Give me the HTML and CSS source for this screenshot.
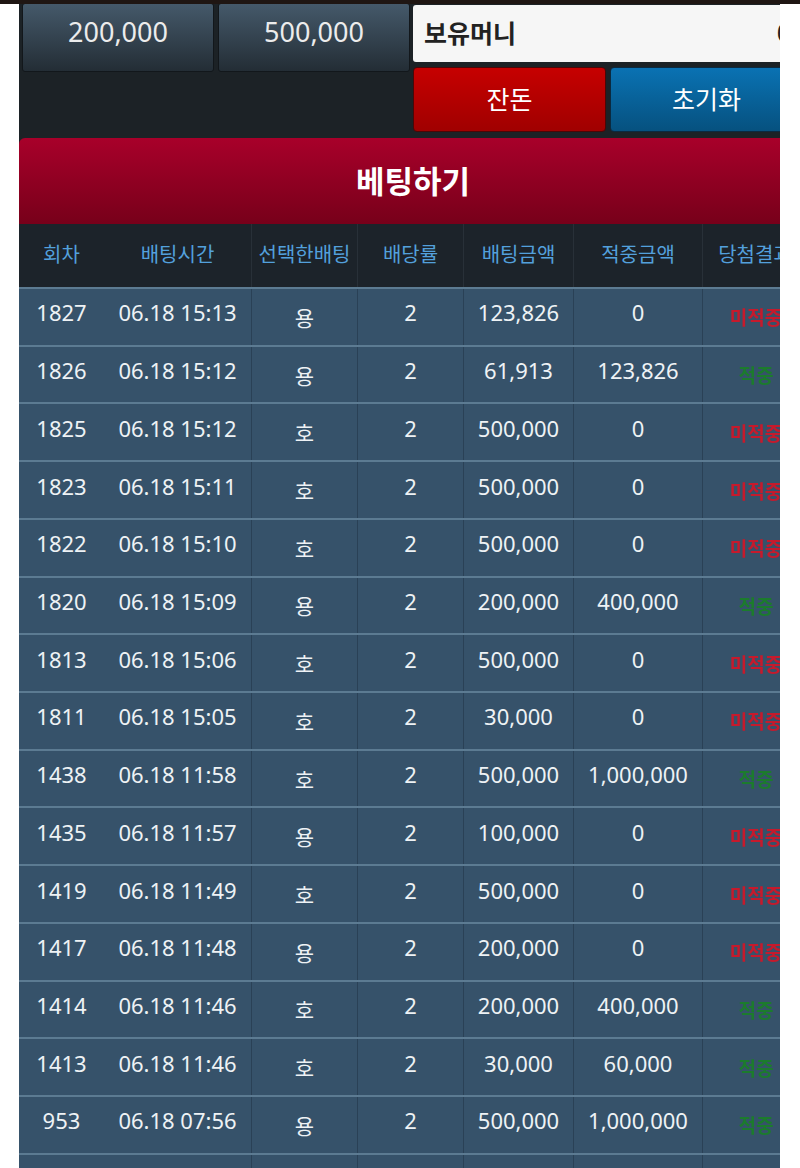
FILE: index.html
```html
<!DOCTYPE html>
<html lang="ko">
<head>
<meta charset="utf-8">
<title>베팅하기</title>
<link rel="stylesheet" href="styles.css">
</head>
<body>
<div class="topbar"></div>
<div class="wrap">
  <div class="inner">
    <div class="controls">
      <div class="amounts">
        <button class="amt">200,000</button>
        <button class="amt">500,000</button>
      </div>
      <div class="money">
        <div class="money-box"><span class="money-label">보유머니</span><span class="money-val">0</span></div>
        <div class="money-btns">
          <button class="btn red">잔돈</button>
          <button class="btn blue">초기화</button>
        </div>
      </div>
    </div>
    <div class="banner">베팅하기</div>
    <div class="table">
      <div class="row head">
        <div class="c">회차</div><div class="c">배팅시간</div><div class="c sep">선택한배팅</div><div class="c sep">배당률</div><div class="c sep">배팅금액</div><div class="c sep">적중금액</div><div class="c sep">당첨결과</div>
      </div>
      <div class="row"><div class="c">1827</div><div class="c">06.18 15:13</div><div class="c sep k">용</div><div class="c sep">2</div><div class="c sep">123,826</div><div class="c sep">0</div><div class="c sep res lose">미적중</div></div>
      <div class="row"><div class="c">1826</div><div class="c">06.18 15:12</div><div class="c sep k">용</div><div class="c sep">2</div><div class="c sep">61,913</div><div class="c sep">123,826</div><div class="c sep res win">적중</div></div>
      <div class="row"><div class="c">1825</div><div class="c">06.18 15:12</div><div class="c sep k">호</div><div class="c sep">2</div><div class="c sep">500,000</div><div class="c sep">0</div><div class="c sep res lose">미적중</div></div>
      <div class="row"><div class="c">1823</div><div class="c">06.18 15:11</div><div class="c sep k">호</div><div class="c sep">2</div><div class="c sep">500,000</div><div class="c sep">0</div><div class="c sep res lose">미적중</div></div>
      <div class="row"><div class="c">1822</div><div class="c">06.18 15:10</div><div class="c sep k">호</div><div class="c sep">2</div><div class="c sep">500,000</div><div class="c sep">0</div><div class="c sep res lose">미적중</div></div>
      <div class="row"><div class="c">1820</div><div class="c">06.18 15:09</div><div class="c sep k">용</div><div class="c sep">2</div><div class="c sep">200,000</div><div class="c sep">400,000</div><div class="c sep res win">적중</div></div>
      <div class="row"><div class="c">1813</div><div class="c">06.18 15:06</div><div class="c sep k">호</div><div class="c sep">2</div><div class="c sep">500,000</div><div class="c sep">0</div><div class="c sep res lose">미적중</div></div>
      <div class="row"><div class="c">1811</div><div class="c">06.18 15:05</div><div class="c sep k">호</div><div class="c sep">2</div><div class="c sep">30,000</div><div class="c sep">0</div><div class="c sep res lose">미적중</div></div>
      <div class="row"><div class="c">1438</div><div class="c">06.18 11:58</div><div class="c sep k">호</div><div class="c sep">2</div><div class="c sep">500,000</div><div class="c sep">1,000,000</div><div class="c sep res win">적중</div></div>
      <div class="row"><div class="c">1435</div><div class="c">06.18 11:57</div><div class="c sep k">용</div><div class="c sep">2</div><div class="c sep">100,000</div><div class="c sep">0</div><div class="c sep res lose">미적중</div></div>
      <div class="row"><div class="c">1419</div><div class="c">06.18 11:49</div><div class="c sep k">호</div><div class="c sep">2</div><div class="c sep">500,000</div><div class="c sep">0</div><div class="c sep res lose">미적중</div></div>
      <div class="row"><div class="c">1417</div><div class="c">06.18 11:48</div><div class="c sep k">용</div><div class="c sep">2</div><div class="c sep">200,000</div><div class="c sep">0</div><div class="c sep res lose">미적중</div></div>
      <div class="row"><div class="c">1414</div><div class="c">06.18 11:46</div><div class="c sep k">호</div><div class="c sep">2</div><div class="c sep">200,000</div><div class="c sep">400,000</div><div class="c sep res win">적중</div></div>
      <div class="row"><div class="c">1413</div><div class="c">06.18 11:46</div><div class="c sep k">호</div><div class="c sep">2</div><div class="c sep">30,000</div><div class="c sep">60,000</div><div class="c sep res win">적중</div></div>
      <div class="row"><div class="c">953</div><div class="c">06.18 07:56</div><div class="c sep k">용</div><div class="c sep">2</div><div class="c sep">500,000</div><div class="c sep">1,000,000</div><div class="c sep res win">적중</div></div>
      <div class="row"><div class="c">&nbsp;</div><div class="c"></div><div class="c sep"></div><div class="c sep"></div><div class="c sep"></div><div class="c sep"></div><div class="c sep"></div></div>
    </div>
  </div>
</div>
</body>
</html>
```

FILE: styles.css
```css
* { box-sizing: border-box; }
html, body { margin: 0; padding: 0; background: #ffffff; }
body {
  font-family: "Noto Sans", "Noto Sans CJK KR", sans-serif;
  height: 1168px;
  overflow: hidden;
}
.topbar {
  height: 4px;
  background: #1f1613;
}
.wrap {
  margin-left: 19px;
  width: 761px;
  overflow: hidden;
}
.inner {
  width: 788px;
  background: #1c2226;
}
.controls {
  display: grid;
  grid-template-columns: 394px 394px;
  height: 134px;
}
.amounts {
  display: flex;
  gap: 4px;
  padding: 0 3px;
  align-items: flex-start;
}
.amt {
  flex: 1;
  height: 69px;
  margin-top: -1px;
  border: 1px solid #12171b;
  border-radius: 3px;
  background: linear-gradient(#45596a, #232d35);
  color: #ececec;
  font-family: "Noto Sans", sans-serif;
  font-size: 27px;
  padding: 0 0 13px;
}
.money {
  display: flex;
  flex-direction: column;
  padding: 1px 0 0 0;
}
.money-box {
  height: 57px;
  width: 392px;
  background: #f6f6f6;
  border-radius: 3px;
  display: flex;
  align-items: center;
  justify-content: space-between;
  padding: 0 14px 4px 11px;
}
.money-label {
  font-family: "Noto Sans CJK KR", sans-serif;
  font-weight: 700;
  font-size: 25px;
  color: #222222;
}
.money-val {
  font-family: "Noto Sans", sans-serif;
  font-size: 25px;
  color: #222222;
}
.money-btns {
  display: flex;
  gap: 4px;
  margin-top: 5px;
  width: 390px;
}
.btn {
  flex: 1;
  height: 65px;
  border-radius: 4px;
  color: #ffffff;
  font-family: "Noto Sans CJK KR", sans-serif;
  font-size: 25px;
  padding: 0 0 4px;
}
.btn.red {
  background: linear-gradient(#c60000, #a00000);
  border: 1px solid #4a0707;
}
.btn.blue {
  background: linear-gradient(#0a72b3, #06517f);
  border: 1px solid #0b2a40;
}
.banner {
  height: 86px;
  background: linear-gradient(#a8002a, #77001a);
  border-radius: 6px 6px 0 0;
  color: #ffffff;
  font-family: "Noto Sans CJK KR", sans-serif;
  font-weight: 700;
  font-size: 31px;
  display: flex;
  align-items: center;
  justify-content: center;
  padding-bottom: 4px;
}
.table {
  background: #36526a;
}
.row {
  display: grid;
  grid-template-columns: 85px 147px 106px 106px 110px 129px 105px;
  height: 57.73px;
  border-top: 2px solid #5c7b92;
}
.row.head {
  height: 63px;
  border-top: 0;
  background: #1c232a;
}
.c {
  display: flex;
  align-items: center;
  justify-content: center;
  color: #eef2f5;
  font-size: 22px;
  padding-bottom: 9px;
  white-space: nowrap;
}
.c.sep { border-left: 1px solid #2a4156; }
.head .c {
  color: #53a0dc;
  font-family: "Noto Sans CJK KR", sans-serif;
  font-size: 20px;
  padding-bottom: 4px;
}
.head .c.sep { border-left: 1px solid #283038; }
.c.k {
  font-family: "Noto Sans CJK KR", sans-serif;
  font-size: 21px;
  padding-bottom: 0;
}
.c.res {
  font-family: "Noto Sans CJK KR", sans-serif;
  font-size: 19px;
  font-weight: 700;
  padding-bottom: 0;
  padding-left: 2px;
  filter: blur(0.7px);
}
.res.lose { color: #c61a2c; }
.res.win { color: #1c7b2d; }
```
